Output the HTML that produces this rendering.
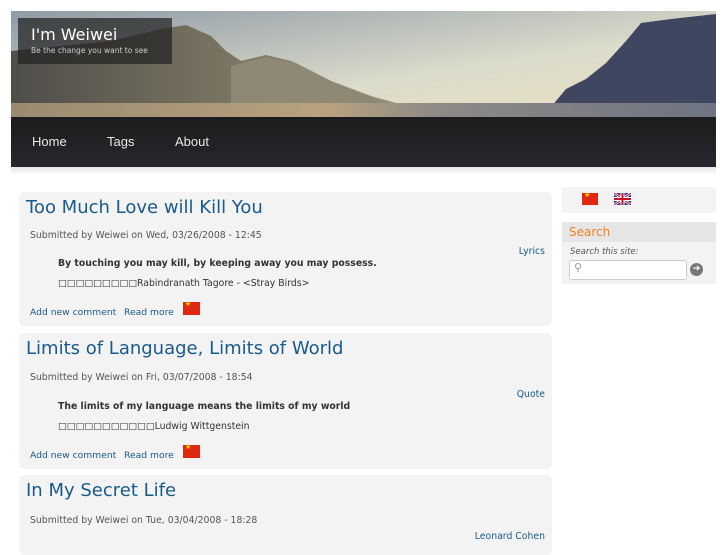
<!DOCTYPE html>
<html><head><meta charset="utf-8"><style>
body{margin:0;background:#fff;font-family:"DejaVu Sans","Liberation Sans",sans-serif;width:727px;height:545px;overflow:hidden;position:relative}
.hdr{position:absolute;left:11px;top:11px;width:705px;height:106px;overflow:hidden}
.nav{position:absolute;left:11px;top:117px;width:705px;height:50px;background:linear-gradient(#1c1c1e,#26272b);}
.nav a{position:absolute;top:17px;color:#e8e8e8;text-decoration:none;font-family:"Liberation Sans","DejaVu Sans",sans-serif;font-size:13px}
.shadow{position:absolute;left:11px;top:167px;width:705px;height:8px;background:linear-gradient(#e6e6e6,#fff)}
.title{position:absolute;left:18px;top:18px;width:154px;height:46px;background:rgba(35,35,35,.72)}
.card{position:absolute;left:19px;width:533px;background:#f3f3f3;border-radius:6px}
.card h2{position:absolute;left:7px;top:5px;margin:0;font-weight:normal;font-size:18px;color:#1a5a8a}
.sub{position:absolute;left:11px;font-size:9.3px;color:#555}
.tag{position:absolute;right:7px;font-size:9.3px;color:#1a5a8a}
.q{position:absolute;left:39px;font-size:9.3px;color:#333}
.lk{position:absolute;font-size:9.2px;color:#1a5a8a}
.cn{position:absolute;width:17px;height:13px;background:#de2910}
.cn:after{content:"★";position:absolute;left:2px;top:-2px;font-size:7px;color:#ffde00}
</style></head><body>
<div class="hdr">
<svg width="705" height="106" style="position:absolute;left:0;top:0">
<defs><linearGradient id="sky" x1="0" y1="0" x2="1" y2="1"><stop offset="0" stop-color="#8e9aa6"/><stop offset=".6" stop-color="#dcdccb"/><stop offset="1" stop-color="#eadfc0"/></linearGradient>
<linearGradient id="fog" x1="0" y1="0" x2="1" y2="0"><stop offset="0" stop-color="#9a8a70"/><stop offset=".45" stop-color="#b8a27e"/><stop offset=".6" stop-color="#8e8a86"/><stop offset="1" stop-color="#6e7484"/></linearGradient>
<linearGradient id="mt" x1="0" y1="0" x2="1" y2="0"><stop offset="0" stop-color="#4e4d48"/><stop offset=".5" stop-color="#75705f"/><stop offset="1" stop-color="#999078"/></linearGradient></defs>
<rect width="705" height="106" fill="url(#sky)"/>
<path d="M0 40 L100 30 L150 18 L175 14 L200 25 L215 40 L230 50 L255 44 L280 50 L320 70 L360 85 L385 92 L0 94Z" fill="url(#mt)"/>
<path d="M220 55 L255 46 L285 52 L320 70 L360 86 L380 94 L220 94Z" fill="#8f8874"/>
<path d="M540 96 L555 78 L575 68 L595 52 L615 30 L630 12 L660 8 L705 3 L705 106 L540 106Z" fill="#3e4660"/>
<rect y="92" width="705" height="14" fill="url(#fog)"/>
</svg>
</div>
<div class="title">
<div style="position:absolute;left:13px;top:7px;color:#fff;font-size:16px">I'm Weiwei</div>
<div style="position:absolute;left:13px;top:28px;color:#ccc;font-size:7.5px">Be the change you want to see</div>
</div>
<div class="nav"><a style="left:21px">Home</a><a style="left:96px">Tags</a><a style="left:164px">About</a></div>
<div class="shadow"></div>

<div class="card" style="top:192px;height:134px">
<h2>Too Much Love will Kill You</h2>
<div class="sub" style="top:38px">Submitted by Weiwei on Wed, 03/26/2008 - 12:45</div>
<div class="tag" style="top:54px">Lyrics</div>
<div class="q" style="top:66px;font-weight:bold">By touching you may kill, by keeping away you may possess.</div>
<div class="q" style="top:86px">□□□□□□□□□Rabindranath Tagore - &lt;Stray Birds&gt;</div>
<div class="lk" style="left:11px;top:115px">Add new comment</div><div class="lk" style="left:105px;top:115px">Read more</div>
<div class="cn" style="left:164px;top:110px"></div>
</div>
<div class="card" style="top:333px;height:136px">
<h2>Limits of Language, Limits of World</h2>
<div class="sub" style="top:39px">Submitted by Weiwei on Fri, 03/07/2008 - 18:54</div>
<div class="tag" style="top:56px">Quote</div>
<div class="q" style="top:68px;font-weight:bold">The limits of my language means the limits of my world</div>
<div class="q" style="top:88px">□□□□□□□□□□□Ludwig Wittgenstein</div>
<div class="lk" style="left:11px;top:117px">Add new comment</div><div class="lk" style="left:105px;top:117px">Read more</div>
<div class="cn" style="left:164px;top:112px"></div>
</div>
<div class="card" style="top:475px;height:80px">
<h2>In My Secret Life</h2>
<div class="sub" style="top:40px">Submitted by Weiwei on Tue, 03/04/2008 - 18:28</div>
<div class="tag" style="top:56px">Leonard Cohen</div>
</div>

<div style="position:absolute;left:562px;top:187px;width:154px;height:26px;background:#f3f3f3">
<div class="cn" style="left:20px;top:6px;width:16px;height:12px"></div>
<svg style="position:absolute;left:52px;top:6px" width="17" height="12" viewBox="0 0 17 12"><rect width="17" height="12" fill="#1f3f8f"/><path d="M0 0L17 12M17 0L0 12" stroke="#fff" stroke-width="2.5"/><path d="M0 0L17 12M17 0L0 12" stroke="#c8102e" stroke-width="1"/><path d="M8.5 0V12M0 6H17" stroke="#fff" stroke-width="4"/><path d="M8.5 0V12M0 6H17" stroke="#c8102e" stroke-width="2"/></svg>
</div>
<div style="position:absolute;left:562px;top:222px;width:154px;height:62px;background:#f3f3f3">
<div style="height:20px;background:#e6e6e6;color:#f08020;font-size:12px;padding-left:7px;line-height:20px">Search</div>
<div style="position:absolute;left:8px;top:25px;font-size:8.5px;font-style:italic;color:#555">Search this site:</div>
<div style="position:absolute;left:7px;top:38px;width:116px;height:18px;background:#fff;border:1px solid #ccc;border-radius:3px"><span style="position:absolute;left:4px;top:0;color:#999;font-size:11px">⚲</span></div>
<div style="position:absolute;left:128px;top:41px;width:13px;height:13px;border-radius:50%;background:#777;color:#fff;font-size:9px;text-align:center;line-height:13px">➔</div>
</div>
</body></html>
